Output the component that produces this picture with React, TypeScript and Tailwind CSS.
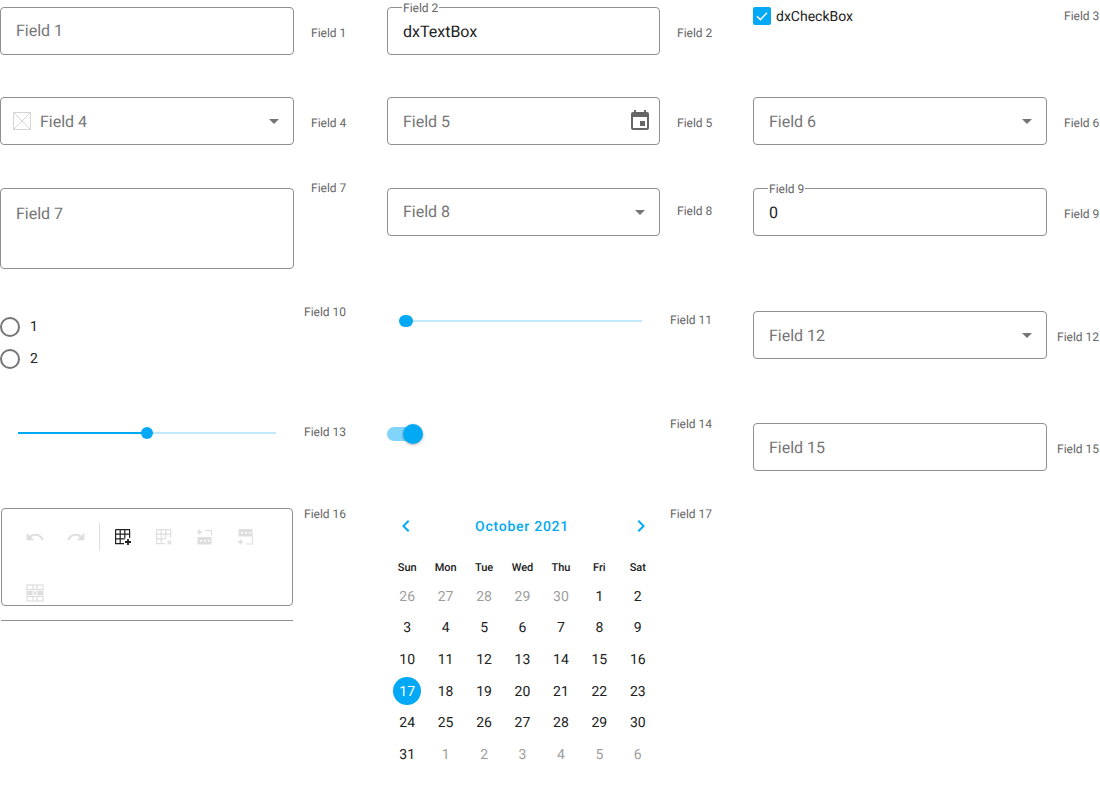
const FONT = "font-['Roboto',sans-serif]"

const CAL_ROWS = [
  [26, 27, 28, 29, 30, 1, 2],
  [3, 4, 5, 6, 7, 8, 9],
  [10, 11, 12, 13, 14, 15, 16],
  [17, 18, 19, 20, 21, 22, 23],
  [24, 25, 26, 27, 28, 29, 30],
  [31, 1, 2, 3, 4, 5, 6],
]
const WEEK_DAYS = ["Sun", "Mon", "Tue", "Wed", "Thu", "Fri", "Sat"]

function Caret() {
  return <div className="w-0 h-0 border-x-[5px] border-x-transparent border-t-[5px] border-t-[#757575]" />
}

function Box({ className = "", children }: { className?: string; children?: React.ReactNode }) {
  return (
    <div className={`relative flex-1 border border-[#8f8f8f] rounded-[4px] bg-white text-base ${className}`}>
      {children}
    </div>
  )
}

function Floating({ text }: { text: string }) {
  return (
    <span className="absolute left-[14px] -top-[7px] bg-white px-px text-xs leading-[14px] text-[#666]">{text}</span>
  )
}

function SideLabel({ text, className = "" }: { text: string; className?: string }) {
  return <div className={`text-xs text-[#666] leading-[14px] whitespace-nowrap ${className}`}>{text}</div>
}

function Glyph({ d, className }: { d: string; className: string }) {
  return (
    <svg viewBox="0 0 24 24" className={className} fill="currentColor">
      <path d={d} />
    </svg>
  )
}

// table icons for the toolbar, drawn on a 18 box
function TableIcon({ kind, className }: { kind: "add" | "del" | "above" | "below" | "cross"; className: string }) {
  return (
    <svg viewBox="0 0 18 18" className={className} fill="none" stroke="currentColor" strokeWidth="1.2">
      {(kind === "add" || kind === "del") && (
        <>
          <path d="M1.6 1.6h14v8.5M1.6 1.6v14h8.5M6.2 1.6v14M10.8 1.6v9M1.6 6.2h14M1.6 10.8h9" />
          {kind === "add" ? (
            <path d="M14 11v6M11 14h6" strokeWidth="1.8" />
          ) : (
            <path d="M12.5 12.5l4 4M16.5 12.5l-4 4" />
          )}
        </>
      )}
      {kind === "above" && (
        <>
          <path d="M1 4h5M3.5 1.5v5" strokeWidth="1.6" />
          <path d="M9 2.5h6.5v5" />
          <rect x="1.5" y="9" width="14" height="7.5" fill="currentColor" stroke="none" />
          <path d="M4 12.8h2M8 12.8h2M12 12.8h2" stroke="white" strokeWidth="1.6" />
        </>
      )}
      {kind === "below" && (
        <>
          <rect x="1.5" y="1" width="14" height="7.5" fill="currentColor" stroke="none" />
          <path d="M4 4.8h2M8 4.8h2M12 4.8h2" stroke="white" strokeWidth="1.6" />
          <path d="M15.5 8.5v7.5H9" />
          <path d="M1 14h5M3.5 11.5v5" strokeWidth="1.6" />
        </>
      )}
      {kind === "cross" && (
        <>
          <rect x="1" y="1" width="16" height="4.5" />
          <rect x="1" y="12.5" width="16" height="4.5" />
          <path d="M0.5 6.8h6v4.4h-6zM11.5 6.8h6v4.4h-6z" fill="currentColor" stroke="none" />
          <path d="M7 1v4.5M11 1v4.5M7 12.5V17M11 12.5V17M7.2 7.2l3.6 3.6M10.8 7.2l-3.6 3.6" />
        </>
      )}
    </svg>
  )
}

function Calendar() {
  return (
    <div className="w-[270px] pt-[2px]">
      <div className="flex items-center h-[32px] text-[#03a9f4]">
        <Glyph className="w-[24px] h-[24px] ml-[7px]" d="M15.41 7.41 14 6l-6 6 6 6 1.41-1.41L10.83 12z" />
        <div className="flex-1 text-center text-sm font-medium tracking-[0.75px] leading-[32px] pr-[3px] mt-[2px]">October 2021</div>
        <Glyph className="w-[24px] h-[24px] mr-[4px]" d="M8.59 16.59 10 18l6-6-6-6-1.41 1.41L13.17 12z" />
      </div>
      <div className="grid grid-cols-7 w-[269px] ml-[1px] mt-[11px] text-center">
        {WEEK_DAYS.map((d) => (
          <div key={d} className="text-[11px] font-medium leading-[29px] h-[27px] text-[#212121]">{d}</div>
        ))}
      </div>
      {CAL_ROWS.map((row, r) => (
        <div key={r} className="grid grid-cols-7 w-[269px] ml-[1px] h-[31.6px] items-center text-center text-sm">
          {row.map((n, i) => {
            const muted = (r === 0 && i < 5) || (r === 5 && i > 0)
            const today = n === 17
            return (
              <div key={i} className="flex justify-center">
                <div
                  className={`w-[28px] h-[28px] rounded-full leading-[30px] ${
                    today ? "bg-[#03a9f4] text-white" : muted ? "text-[#9e9e9e]" : "text-[#212121]"
                  }`}
                >
                  {n}
                </div>
              </div>
            )
          })}
        </div>
      ))}
    </div>
  )
}

export default function App() {
  return (
    <div className={`${FONT} [text-rendering:geometricPrecision] w-[1100px] h-[800px] overflow-hidden bg-white text-[#212121] pt-[7px]`}>
      <div className="grid grid-cols-[347px_326px_347px] gap-x-[40px] grid-rows-[90px_91px_116px_112px_92px_auto]">
        {/* row 1 */}
        <div className="flex items-start">
          <Box className="h-[48px] mr-[17px] pl-[15px] leading-[46px] text-[#757575]">Field 1</Box>
          <SideLabel text="Field 1" className="mt-[19px] w-[36px]" />
        </div>
        <div className="flex items-start">
          <Box className="h-[48px] mr-[17px] pl-[15px] leading-[48px]">
            <Floating text="Field 2" />
            dxTextBox
          </Box>
          <SideLabel text="Field 2" className="mt-[19px] w-[36px]" />
        </div>
        <div className="flex items-start">
          <div className="flex-1 flex items-center gap-[5px] h-[18px] text-sm mt-0">
            <div className="w-[18px] h-[18px] rounded-[2px] bg-[#03a9f4] flex items-center justify-center">
              <svg viewBox="0 0 18 18" className="w-[18px] h-[18px]" fill="none" stroke="white" strokeWidth="1.5">
                <path d="M4 9.3l3.4 3.4L14 5.8" />
              </svg>
            </div>
            <span className="mt-[2px]">dxCheckBox</span>
          </div>
          <SideLabel text="Field 3" className="mt-[2px] w-[36px]" />
        </div>

        {/* row 2 */}
        <div className="flex items-start">
          <Box className="h-[48px] mr-[17px] flex items-center pl-[12px] text-[#757575]">
            <svg viewBox="0 0 18 18" className="w-[18px] h-[18px] mr-[9px]" fill="none" stroke="#d4d4d4" strokeWidth="1">
              <path d="M.5.5h17v17H.5zM.5.5l17 17M17.5.5l-17 17" />
            </svg>
            <span className="mt-[2px]">Field 4</span>
            <div className="ml-auto mr-[14px]"><Caret /></div>
          </Box>
          <SideLabel text="Field 4" className="mt-[19px] w-[36px]" />
        </div>
        <div className="flex items-start">
          <Box className="h-[48px] mr-[17px] flex items-center pl-[15px] text-[#757575]">
            <span className="mt-[2px]">Field 5</span>
            <Glyph
              className="ml-auto mr-[7px] w-[24px] h-[24px] text-[#666]"
              d="M17 12h-5v5h5v-5zM16 1v2H8V1H6v2H5c-1.11 0-1.99.9-1.99 2L3 19c0 1.1.89 2 2 2h14c1.1 0 2-.9 2-2V5c0-1.1-.9-2-2-2h-1V1h-2zm3 18H5V8h14v11z"
            />
          </Box>
          <SideLabel text="Field 5" className="mt-[19px] w-[36px]" />
        </div>
        <div className="flex items-start">
          <Box className="h-[48px] mr-[17px] flex items-center pl-[15px] text-[#757575]">
            <span className="mt-[2px]">Field 6</span>
            <div className="ml-auto mr-[14px]"><Caret /></div>
          </Box>
          <SideLabel text="Field 6" className="mt-[19px] w-[36px]" />
        </div>

        {/* row 3 */}
        <div className="flex items-start">
          <Box className="h-[81px] mr-[17px] pl-[15px] pt-[13px] leading-[24px] text-[#757575]">Field 7</Box>
          <SideLabel text="Field 7" className="-mt-[7px] w-[36px]" />
        </div>
        <div className="flex items-start">
          <Box className="h-[48px] mr-[17px] flex items-center pl-[15px] text-[#757575]">
            Field 8
            <div className="ml-auto mr-[14px]"><Caret /></div>
          </Box>
          <SideLabel text="Field 8" className="mt-[16px] w-[36px]" />
        </div>
        <div className="flex items-start">
          <Box className="h-[48px] mr-[17px] pl-[15px] leading-[48px]">
            <Floating text="Field 9" />
            0
          </Box>
          <SideLabel text="Field 9" className="mt-[19px] w-[36px]" />
        </div>

        {/* row 4 */}
        <div className="flex items-start">
          <div className="flex-1 flex flex-col gap-[12px] pt-[13px] text-sm">
            {["1", "2"].map((v) => (
              <div key={v} className="flex items-center h-[20px] gap-[10px]">
                <div className="w-[20px] h-[20px] rounded-full border-2 border-[#757575]" />
                {v}
              </div>
            ))}
          </div>
          <SideLabel text="Field 10" className="mt-[1px] w-[43px]" />
        </div>
        <div className="flex items-start">
          <div className="flex-1 mr-[28px] ml-[12px] mt-[10px] h-[14px] flex items-center relative">
            <div className="w-full h-[2px] bg-[#c0e9fc]" />
            <div className="absolute left-0 w-[14px] h-[12px] rounded-full bg-[#03a9f4]" />
          </div>
          <SideLabel text="Field 11" className="mt-[9px] w-[43px]" />
        </div>
        <div className="flex items-start">
          <Box className="h-[48px] mt-[7px] mr-[10px] flex items-center pl-[15px] text-[#757575]">
            <span className="mt-[2px]">Field 12</span>
            <div className="ml-auto mr-[14px]"><Caret /></div>
          </Box>
          <SideLabel text="Field 12" className="mt-[26px] w-[43px]" />
        </div>

        {/* row 5 */}
        <div className="flex items-start">
          <div className="flex-1 mr-[28px] ml-[18px] mt-[10px] h-[14px] flex items-center relative">
            <div className="w-1/2 h-[2px] bg-[#03a9f4]" />
            <div className="w-1/2 h-[2px] bg-[#c0e9fc]" />
            <div className="absolute left-[123px] w-[12px] h-[12px] rounded-full bg-[#03a9f4]" />
          </div>
          <SideLabel text="Field 13" className="mt-[9px] w-[43px]" />
        </div>
        <div className="flex items-start">
          <div className="flex-1 mt-[8px] relative h-[20px]">
            <div className="absolute left-0 top-[3px] w-[28px] h-[14px] rounded-full bg-[#81d4fa]" />
            <div className="absolute left-[16px] top-0 w-[20px] h-[20px] rounded-full bg-[#03a9f4] shadow-[0_1px_3px_rgba(0,0,0,0.3)]" />
          </div>
          <SideLabel text="Field 14" className="mt-[1px] w-[43px]" />
        </div>
        <div className="flex items-start">
          <Box className="h-[48px] mt-[7px] mr-[10px] pl-[15px] leading-[48px] text-[#757575]">Field 15</Box>
          <SideLabel text="Field 15" className="mt-[26px] w-[43px]" />
        </div>

        {/* row 6 */}
        <div className="flex items-start">
          <div className="w-[292px] ml-[1px] mr-[11px]">
            <div className="h-[98px] border border-[#8f8f8f] rounded-[4px] relative text-[#dedede]">
              <div className="flex items-center h-[55px] pl-[23px]">
                <Glyph className="w-[20px] h-[20px] mr-[21px]" d="M12.5 8c-2.65 0-5.05.99-6.9 2.6L2 7v9h9l-3.62-3.62c1.39-1.16 3.16-1.88 5.12-1.88 3.54 0 6.55 2.31 7.6 5.5l2.37-.78C21.08 11.03 17.15 8 12.5 8z" />
                <Glyph className="w-[20px] h-[20px] mr-[13px]" d="M18.4 10.6C16.55 8.99 14.15 8 11.5 8c-4.65 0-8.58 3.03-9.96 7.22L3.9 16c1.05-3.19 4.05-5.5 7.6-5.5 1.95 0 3.73.72 5.12 1.88L13 16h9V7l-3.6 3.6z" />
                <div className="w-px h-[28px] bg-[#dedede] mr-[14px]" />
                <TableIcon kind="add" className="w-[18px] h-[18px] mr-[23px] text-[#212121]" />
                <TableIcon kind="del" className="w-[18px] h-[18px] mr-[23px]" />
                <TableIcon kind="above" className="w-[18px] h-[18px] mr-[23px]" />
                <TableIcon kind="below" className="w-[18px] h-[18px]" />
              </div>
              <div className="pl-[24px] pt-[20px]">
                <TableIcon kind="cross" className="w-[18px] h-[18px]" />
              </div>
            </div>
            <div className="mt-[14px] h-px bg-[#8f8f8f]" />
          </div>
          <SideLabel text="Field 16" className="-mt-[1px]" />
        </div>
        <div className="flex items-start">
          <Calendar />
          <SideLabel text="Field 17" className="ml-[13px] -mt-[1px]" />
        </div>
        <div />
      </div>
    </div>
  )
}
